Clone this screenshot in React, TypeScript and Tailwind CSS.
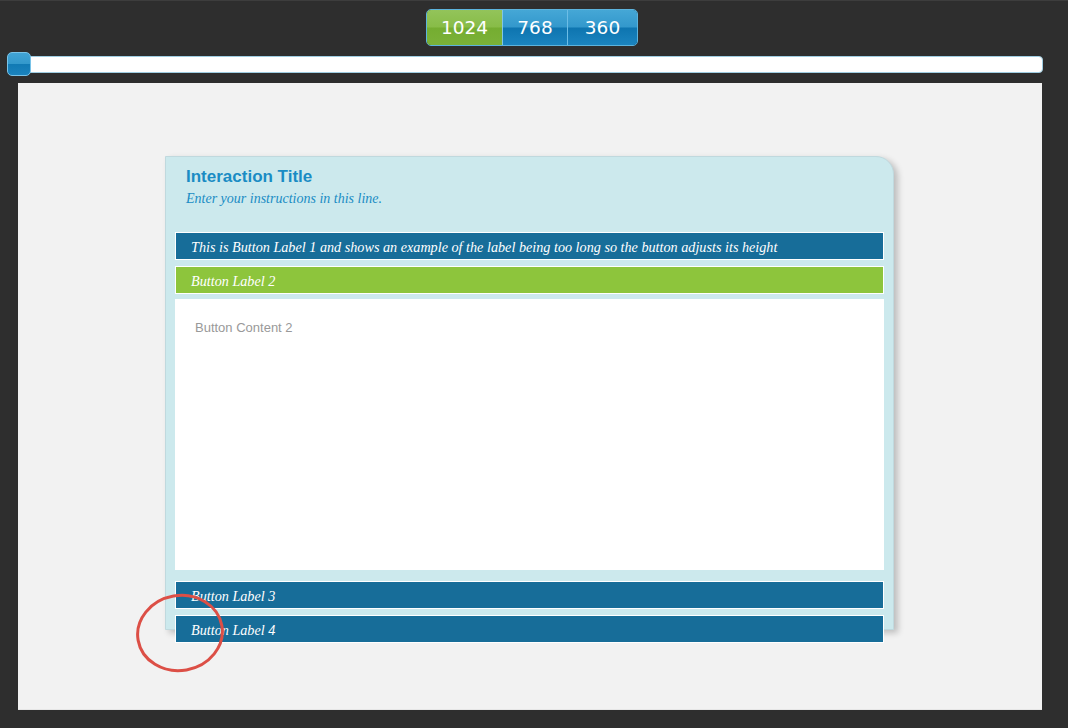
const sizes = ['1024', '768', '360']

const labels = [
  'This is Button Label 1 and shows an example of the label being too long so the button adjusts its height',
  'Button Label 2',
  'Button Label 3',
  'Button Label 4',
]

function App() {
  return (
    <main className="relative h-[728px] overflow-hidden border-t border-[#3d3d3d] bg-[#2e2e2e] font-['Liberation_Sans',Arial,sans-serif]">
      {/* breakpoint switcher */}
      <div className="flex justify-center pt-[8px] pr-[4px]">
        <div className="flex h-[37px] overflow-hidden rounded-[5px] border border-[#5cb3dd] font-['DejaVu_Sans',Verdana,sans-serif] text-[18.5px] text-white">
          {sizes.map((size, i) => (
            <button
              key={size}
              className={
                i === 0
                  ? 'w-[76px] border-r border-[#7fc6e6] bg-[linear-gradient(to_bottom,#93c45a_0%,#88bc48_48%,#75ad31_52%,#7bb138_100%)] pt-[1px]'
                  : i === 1
                    ? 'w-[65px] border-r border-[#6cbde6] bg-[linear-gradient(to_bottom,#45a7d6_0%,#3398cc_48%,#0e75b0_52%,#1b84bf_100%)] pt-[1px]'
                    : 'w-[69px] bg-[linear-gradient(to_bottom,#45a7d6_0%,#3398cc_48%,#0e75b0_52%,#1b84bf_100%)] pt-[1px]'
              }
            >
              {size}
            </button>
          ))}
        </div>
      </div>

      {/* width slider */}
      <div className="relative mt-[6px] ml-[7px] h-[24px] w-[1036px]">
        <div className="absolute top-[4px] right-0 left-[1px] h-[17px] rounded-r-[4px] border border-[#9fcde2] bg-white" />
        <div className="absolute top-0 left-0 h-[24px] w-[24px] rounded-[5px] border border-[#79c3e8] bg-[linear-gradient(to_bottom,#41a3d4_0%,#3399cc_48%,#117ab4_52%,#1b83bd_100%)]" />
      </div>

      {/* stage */}
      <div className="mt-[7px] ml-[18px] h-[627px] w-[1024px] border-b border-[#e6e6e6] bg-[#f2f2f2] pt-[73px] pl-[147px]">
        <div className="h-[474px] w-[729px] rounded-tr-[18px] border border-[#c0d9de] bg-[#cce9ed] shadow-[4px_3px_6px_rgba(0,0,0,0.22)]">
          <div className="h-[75px] px-[20px] pt-[10px]">
            <h1 className="text-[17px] leading-[20px] font-bold text-[#1a8cc4]">
              Interaction Title
            </h1>
            <p className="mt-[4px] font-['Liberation_Serif',Georgia,serif] text-[14px] leading-[16px] text-[#1a8cc4] italic">
              Enter your instructions in this line.
            </p>
          </div>

          <div className="px-[9px]">
            <Label text={labels[0]} />
            <Label text={labels[1]} active className="mt-[6px]" />
            <div className="mt-[5px] h-[271px] bg-white pt-[21px] pl-[20px] text-[13px] leading-[16px] text-[#999999]">
              Button Content 2
            </div>
            <Label text={labels[2]} className="mt-[11px]" />
            <Label text={labels[3]} className="mt-[6px]" />
          </div>
        </div>
      </div>

      {/* review marker */}
      <svg
        className="pointer-events-none absolute top-[591px] left-[135px]"
        width="92"
        height="82"
        viewBox="0 0 92 82"
      >
        <ellipse
          cx="45"
          cy="41"
          rx="42.5"
          ry="37.5"
          transform="rotate(-10 45 41)"
          fill="none"
          stroke="#dc4f46"
          strokeWidth="3"
        />
      </svg>
    </main>
  )
}

function Label({
  text,
  active = false,
  className = '',
}: {
  text: string
  active?: boolean
  className?: string
}) {
  return (
    <div
      className={`flex min-h-[28px] items-center border border-white pt-[1px] pl-[15px] font-['Liberation_Serif',Georgia,serif] text-[14.2px] leading-[16px] text-white italic ${
        active ? 'bg-[#8dc53c]' : 'bg-[#176d99]'
      } ${className}`}
    >
      {text}
    </div>
  )
}

export default App
